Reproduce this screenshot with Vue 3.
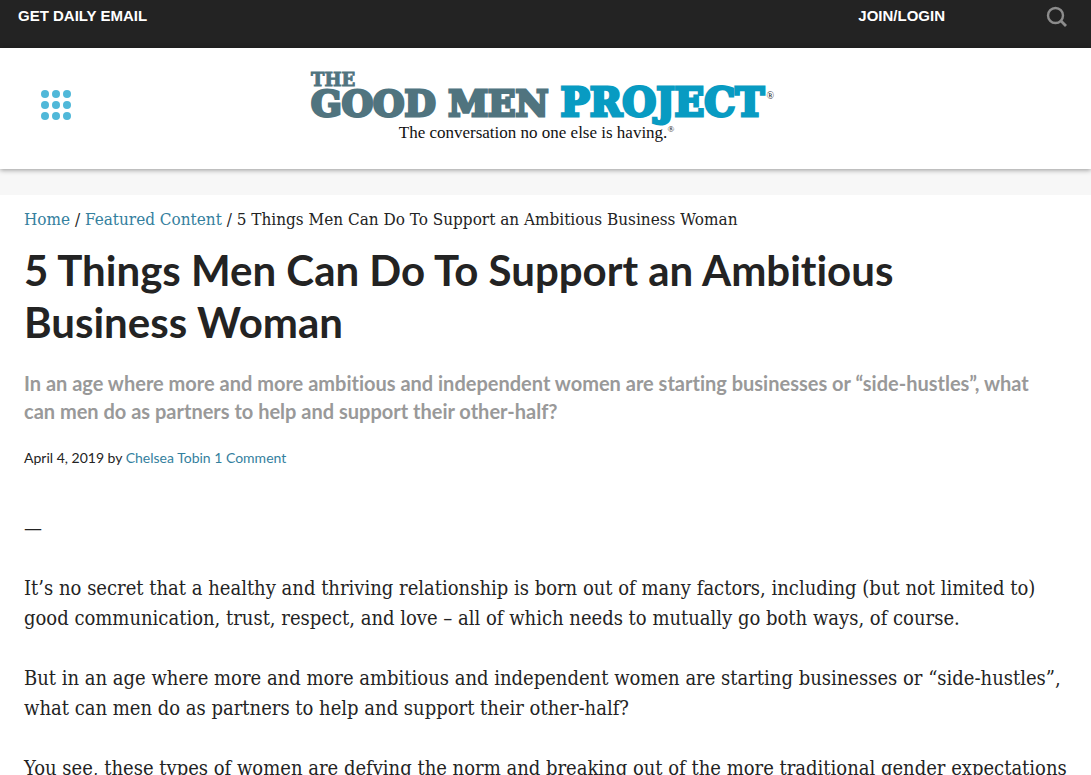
<script setup>
const title = '5 Things Men Can Do To Support an Ambitious Business Woman'
const dots = [6, 17, 28].flatMap((y) => [6, 17, 28].map((x) => ({ x, y })))
</script>

<template>
  <div class="page">
    <nav class="topbar" aria-label="Account">
      <a class="daily" href="#email">GET DAILY EMAIL</a>
      <a class="login" href="#login">JOIN/LOGIN</a>
      <button class="search" type="button" aria-label="Search">
        <svg width="22" height="22" viewBox="0 0 22 22" fill="none" stroke="#8c8c8c">
          <circle cx="9.5" cy="9.5" r="7.5" stroke-width="2.4" />
          <path d="M14.8 14.8 L20 20" stroke-width="2.8" />
        </svg>
      </button>
    </nav>

    <header class="masthead">
      <button class="menu" type="button" aria-label="Menu">
        <svg width="34" height="34" viewBox="0 0 34 34" fill="#50b8d9">
          <circle v-for="(d, i) in dots" :key="i" :cx="d.x" :cy="d.y" r="4" />
        </svg>
      </button>
      <a class="logo" href="#home">
        <span class="the">THE</span>
        <span class="name">
          <span class="goodmen">GOOD MEN</span>
          <span class="project">PROJECT</span>
          <span class="mark">®</span>
        </span>
        <span class="tagline">The conversation no one else is having.<span class="tagmark">®</span></span>
      </a>
    </header>
    <div class="band"></div>

    <main class="article">
      <nav class="crumbs" aria-label="Breadcrumb">
        <a href="#home">Home</a> / <a href="#featured">Featured Content</a> / {{ title }}
      </nav>
      <h1>{{ title }}</h1>
      <h2>
        In an age where more and more ambitious and independent women are starting businesses or “side-hustles”, what
        can men do as partners to help and support their other-half?
      </h2>
      <p class="meta">
        April 4, 2019 by <a href="#author">Chelsea Tobin</a> <a href="#comments">1 Comment</a>
      </p>
      <div class="body">
        <p>—</p>
        <p>
          It’s no secret that a healthy and thriving relationship is born out of many factors, including (but not
          limited to) good communication, trust, respect, and love – all of which needs to mutually go both ways, of
          course.
        </p>
        <p>
          But in an age where more and more ambitious and independent women are starting businesses or
          “side-hustles”, what can men do as partners to help and support their other-half?
        </p>
        <p>You see, these types of women are defying the norm and breaking out of the more traditional gender expectations</p>
      </div>
    </main>
  </div>
</template>

<style>
body {
  margin: 0;
  background: #fff;
}
</style>

<style scoped>
.page {
  height: 100vh;
  overflow: hidden;
  color: #232323;
  font-family: "DejaVu Serif Condensed", "DejaVu Serif", serif;
}
a {
  color: #34809e;
  text-decoration: none;
}
button {
  padding: 0;
  border: 0;
  background: none;
  line-height: 0;
  cursor: pointer;
}
.topbar {
  display: grid;
  grid-template-columns: 1fr auto 123px;
  align-items: start;
  height: 48px;
  padding: 6px 23px 0 18px;
  box-sizing: border-box;
  background: #232323;
  font: bold 15px/20px "Liberation Sans", Arial, sans-serif;
}
.topbar a {
  color: #fff;
}
.search {
  justify-self: end;
}
.masthead {
  position: relative;
  z-index: 1;
  display: grid;
  grid-template-columns: 1fr auto 1fr;
  align-items: center;
  height: 121px;
  padding: 0 45px 0 39px;
  background: #fff;
  box-shadow: 0 1px 5px rgba(0, 0, 0, 0.4);
}
.menu {
  justify-self: start;
  margin-bottom: 8px;
}
.logo {
  display: flex;
  flex-direction: column;
  padding-top: 2px;
  color: #50747f;
  font-family: "DejaVu Serif", serif;
  font-weight: bold;
}
.the {
  font-size: 18px;
  line-height: 18px;
  -webkit-text-stroke: 1px;
}
.name {
  display: flex;
  align-items: baseline;
  line-height: 26px;
  -webkit-text-stroke: 3px;
}
.goodmen {
  font-size: 36px;
  margin-right: 12px;
}
.project {
  font-size: 39px;
  color: #089bc2;
}
.mark {
  align-self: flex-start;
  margin-left: 2px;
  color: #232323;
  font: 10px/14px "Liberation Serif", serif;
  -webkit-text-stroke: 0;
}
.tagline {
  align-self: center;
  margin: 2px 12px 0 0;
  color: #111;
  font: 17px/30px "Liberation Serif", serif;
}
.tagmark {
  font-size: 9px;
  vertical-align: top;
  line-height: 22px;
}
.band {
  height: 26px;
  background: #f7f7f7;
}
.article {
  padding: 9px 24px 0;
}
.crumbs {
  font-size: 17px;
  line-height: 30px;
}
h1 {
  margin: 10px 28px 21px 0;
  font: bold 42px/52px Lato, sans-serif;
  font-variant-ligatures: none;
}
h2 {
  margin: 0 28px 19px 0;
  color: #999;
  font: bold 20px/28px Lato, sans-serif;
  font-variant-ligatures: none;
}
.meta {
  margin: 0 0 41px;
  font: 14px/28px Lato, sans-serif;
}
.body {
  font-size: 20px;
  line-height: 30px;
}
.body p {
  margin: 0 0 30px;
}
</style>
